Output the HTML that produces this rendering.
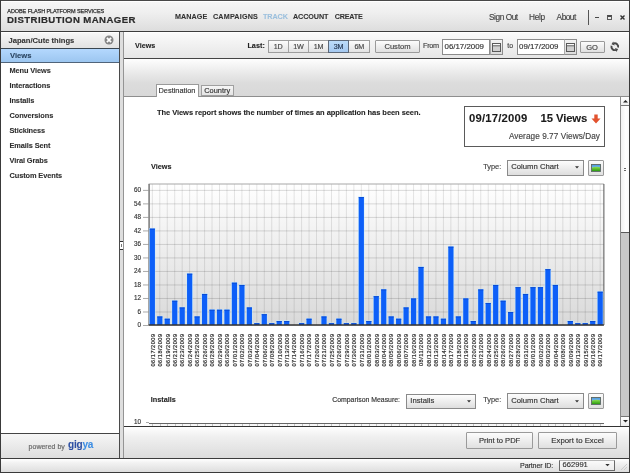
<!DOCTYPE html>
<html><head><meta charset="utf-8"><style>
html,body{margin:0;padding:0;width:630px;height:473px;overflow:hidden;background:#fff}
body{position:relative;font-family:"Liberation Sans", sans-serif;}
div{font-family:"Liberation Sans", sans-serif;}
</style></head><body><div style="position:absolute;left:0;top:0;width:630px;height:473px;will-change:transform">
<div style="position:absolute;left:0;top:0;width:630px;height:473px;background:#fff"></div>
<div style="position:absolute;left:0px;top:0px;width:630px;height:32px;background:linear-gradient(#f7f7f7 0%,#efefef 40%,#dcdcdc 100%)"></div>
<div style="position:absolute;left:0px;top:0px;width:630px;height:1px;background:#484848"></div>
<div style="position:absolute;left:1px;top:1px;width:628px;height:1px;background:#ffffff"></div>
<div style="position:absolute;left:0px;top:31px;width:630px;height:1px;background:#3c3c3c"></div>
<div style="position:absolute;left:7.3px;top:9.35px;font-size:5.5px;line-height:5.5px;font-weight:normal;color:#333;white-space:nowrap;letter-spacing:-0.07px;-webkit-text-stroke:0.15px currentColor;-webkit-text-stroke:0.25px #333;">ADOBE FLASH PLATFORM SERVICES</div>
<div style="position:absolute;left:7px;top:15.20px;font-size:9.6px;line-height:9.6px;font-weight:bold;color:#2b2b2b;white-space:nowrap;letter-spacing:0.42px;-webkit-text-stroke:0.08px currentColor;-webkit-text-stroke:0.2px #2b2b2b;">DISTRIBUTION MANAGER</div>
<div style="position:absolute;left:175px;top:13.20px;font-size:7.2px;line-height:7.2px;font-weight:bold;color:#333;white-space:nowrap;letter-spacing:0.05px;-webkit-text-stroke:0.08px currentColor;">MANAGE</div>
<div style="position:absolute;left:213px;top:13.20px;font-size:7.2px;line-height:7.2px;font-weight:bold;color:#333;white-space:nowrap;letter-spacing:0.18px;-webkit-text-stroke:0.08px currentColor;">CAMPAIGNS</div>
<div style="position:absolute;left:263px;top:13.20px;font-size:7.2px;line-height:7.2px;font-weight:bold;color:#9cc0de;white-space:nowrap;letter-spacing:-0.05px;-webkit-text-stroke:0.08px currentColor;">TRACK</div>
<div style="position:absolute;left:293px;top:13.20px;font-size:7.2px;line-height:7.2px;font-weight:bold;color:#333;white-space:nowrap;letter-spacing:-0.08px;-webkit-text-stroke:0.08px currentColor;">ACCOUNT</div>
<div style="position:absolute;left:334.7px;top:13.20px;font-size:7.2px;line-height:7.2px;font-weight:bold;color:#333;white-space:nowrap;letter-spacing:-0.2px;-webkit-text-stroke:0.08px currentColor;">CREATE</div>
<div style="position:absolute;left:489px;top:13.15px;font-size:8.3px;line-height:8.3px;font-weight:normal;color:#444;white-space:nowrap;letter-spacing:-0.45px;-webkit-text-stroke:0.15px currentColor;">Sign Out</div>
<div style="position:absolute;left:529px;top:13.15px;font-size:8.3px;line-height:8.3px;font-weight:normal;color:#444;white-space:nowrap;letter-spacing:-0.3px;-webkit-text-stroke:0.15px currentColor;">Help</div>
<div style="position:absolute;left:556.6px;top:13.15px;font-size:8.3px;line-height:8.3px;font-weight:normal;color:#444;white-space:nowrap;letter-spacing:-0.5px;-webkit-text-stroke:0.15px currentColor;">About</div>
<div style="position:absolute;left:587.5px;top:9.5px;width:1px;height:15px;background:#555"></div>
<div style="position:absolute;left:594.7px;top:16.6px;width:4.6px;height:1.4px;background:#4a4a4a"></div>
<div style="position:absolute;left:607px;top:14.8px;width:5.2px;height:5.2px;box-sizing:border-box;border:1px solid #5a5a5a;border-top:2px solid #4a4a4a"></div>
<svg style="position:absolute;left:619px;top:14px" width="7" height="7"><path d="M1.5 1.5 L5.5 5.5 M5.5 1.5 L1.5 5.5" stroke="#333" stroke-width="1.4"/></svg>
<div style="position:absolute;left:1px;top:32px;width:118px;height:16px;background:linear-gradient(#f8f8f8,#e2e2e2)"></div>
<div style="position:absolute;left:1px;top:32px;width:118px;height:1px;background:#fff"></div>
<div style="position:absolute;left:1px;top:48px;width:118px;height:1px;background:#3a4650"></div>
<div style="position:absolute;left:8.5px;top:37.00px;font-size:7.6px;line-height:7.6px;font-weight:bold;color:#333;white-space:nowrap;-webkit-text-stroke:0.08px currentColor;">Japan/Cute things</div>
<svg style="position:absolute;left:103.5px;top:35.2px" width="10" height="10"><circle cx="5" cy="5" r="4.5" fill="#858585"/><path d="M2.9 2.9 L7.1 7.1 M7.1 2.9 L2.9 7.1" stroke="#fff" stroke-width="1.7"/></svg>
<div style="position:absolute;left:1px;top:49px;width:118px;height:13px;background:linear-gradient(#b4d8fe,#9cc6f0)"></div>
<div style="position:absolute;left:1px;top:62px;width:118px;height:1px;background:#50647a"></div>
<div style="position:absolute;left:10px;top:52.00px;font-size:7.6px;line-height:7.6px;font-weight:bold;color:#2a4460;white-space:nowrap;-webkit-text-stroke:0.08px currentColor;">Views</div>
<div style="position:absolute;left:9.5px;top:67.10px;font-size:7.4px;line-height:7.4px;font-weight:bold;color:#2e2e2e;white-space:nowrap;letter-spacing:-0.1px;-webkit-text-stroke:0.08px currentColor;">Menu Views</div>
<div style="position:absolute;left:9.5px;top:82.10px;font-size:7.4px;line-height:7.4px;font-weight:bold;color:#2e2e2e;white-space:nowrap;letter-spacing:-0.1px;-webkit-text-stroke:0.08px currentColor;">Interactions</div>
<div style="position:absolute;left:9.5px;top:97.10px;font-size:7.4px;line-height:7.4px;font-weight:bold;color:#2e2e2e;white-space:nowrap;letter-spacing:-0.1px;-webkit-text-stroke:0.08px currentColor;">Installs</div>
<div style="position:absolute;left:9.5px;top:112.10px;font-size:7.4px;line-height:7.4px;font-weight:bold;color:#2e2e2e;white-space:nowrap;letter-spacing:-0.1px;-webkit-text-stroke:0.08px currentColor;">Conversions</div>
<div style="position:absolute;left:9.5px;top:127.10px;font-size:7.4px;line-height:7.4px;font-weight:bold;color:#2e2e2e;white-space:nowrap;letter-spacing:-0.1px;-webkit-text-stroke:0.08px currentColor;">Stickiness</div>
<div style="position:absolute;left:9.5px;top:142.10px;font-size:7.4px;line-height:7.4px;font-weight:bold;color:#2e2e2e;white-space:nowrap;letter-spacing:-0.1px;-webkit-text-stroke:0.08px currentColor;">Emails Sent</div>
<div style="position:absolute;left:9.5px;top:157.10px;font-size:7.4px;line-height:7.4px;font-weight:bold;color:#2e2e2e;white-space:nowrap;letter-spacing:-0.1px;-webkit-text-stroke:0.08px currentColor;">Viral Grabs</div>
<div style="position:absolute;left:9.5px;top:172.10px;font-size:7.4px;line-height:7.4px;font-weight:bold;color:#2e2e2e;white-space:nowrap;letter-spacing:-0.1px;-webkit-text-stroke:0.08px currentColor;">Custom Events</div>
<div style="position:absolute;left:1px;top:433px;width:118px;height:1px;background:#444"></div>
<div style="position:absolute;left:1px;top:434px;width:118px;height:24px;background:linear-gradient(#f6f6f6,#dedede)"></div>
<div style="position:absolute;left:28.6px;top:442.60px;font-size:7px;line-height:7px;font-weight:normal;color:#666;white-space:nowrap;-webkit-text-stroke:0.15px currentColor;">powered by</div>
<div style="position:absolute;left:68px;top:440.10px;font-size:10px;line-height:10px;font-weight:bold;color:#2d4fa3;white-space:nowrap;letter-spacing:-0.2px;-webkit-text-stroke:0.08px currentColor;"><span style="color:#2d4fa3">gig</span><span style="color:#3d8ee4">ya</span></div>
<div style="position:absolute;left:0px;top:0px;width:1px;height:473px;background:#3a3a3a"></div>
<div style="position:absolute;left:119px;top:32px;width:1px;height:427px;background:#4a4a4a"></div>
<div style="position:absolute;left:120px;top:32px;width:3px;height:427px;background:#dedede"></div>
<div style="position:absolute;left:119.5px;top:241px;width:4px;height:9px;box-sizing:border-box;background:#fff;border-top:1px solid #333;border-bottom:1px solid #333"></div>
<div style="position:absolute;left:121px;top:243.5px;width:1px;height:3.5px;background:#777"></div>
<div style="position:absolute;left:123px;top:32px;width:1px;height:427px;background:#949494"></div>
<div style="position:absolute;left:124px;top:32px;width:505px;height:26px;background:linear-gradient(#fbfbfb,#e6e6e6)"></div>
<div style="position:absolute;left:124px;top:32px;width:505px;height:1px;background:#ffffff"></div>
<div style="position:absolute;left:124px;top:58px;width:505px;height:1px;background:#444"></div>
<div style="position:absolute;left:135px;top:41.90px;font-size:7.2px;line-height:7.2px;font-weight:bold;color:#222;white-space:nowrap;-webkit-text-stroke:0.08px currentColor;">Views</div>
<div style="position:absolute;left:247.4px;top:42.15px;font-size:7.3px;line-height:7.3px;font-weight:bold;color:#222;white-space:nowrap;-webkit-text-stroke:0.08px currentColor;">Last:</div>
<div style="position:absolute;left:268px;top:40px;width:102px;height:13px;box-sizing:border-box;border:1px solid #9c9c9c;background:linear-gradient(#fcfcfc,#e3e3e3)"></div>
<div style="position:absolute;left:288px;top:41px;width:1px;height:11px;background:#a4a4a4"></div>
<div style="position:absolute;left:308px;top:41px;width:1px;height:11px;background:#a4a4a4"></div>
<div style="position:absolute;left:328px;top:40px;width:21px;height:13px;box-sizing:border-box;border:1px solid #5c6878;background:linear-gradient(#bcdcfa,#a4c8f0)"></div>
<div style="position:absolute;left:78.19999999999999px;width:400px;text-align:center;top:43.10px;font-size:7.2px;line-height:7.2px;font-weight:normal;color:#444;white-space:nowrap;letter-spacing:-0.2px;-webkit-text-stroke:0.15px currentColor;">1D</div>
<div style="position:absolute;left:98.5px;width:400px;text-align:center;top:43.10px;font-size:7.2px;line-height:7.2px;font-weight:normal;color:#444;white-space:nowrap;letter-spacing:-0.2px;-webkit-text-stroke:0.15px currentColor;">1W</div>
<div style="position:absolute;left:118.5px;width:400px;text-align:center;top:43.10px;font-size:7.2px;line-height:7.2px;font-weight:normal;color:#444;white-space:nowrap;letter-spacing:-0.2px;-webkit-text-stroke:0.15px currentColor;">1M</div>
<div style="position:absolute;left:138.5px;width:400px;text-align:center;top:43.10px;font-size:7.2px;line-height:7.2px;font-weight:normal;color:#22344f;white-space:nowrap;letter-spacing:-0.2px;-webkit-text-stroke:0.15px currentColor;">3M</div>
<div style="position:absolute;left:159.2px;width:400px;text-align:center;top:43.10px;font-size:7.2px;line-height:7.2px;font-weight:normal;color:#444;white-space:nowrap;letter-spacing:-0.2px;-webkit-text-stroke:0.15px currentColor;">6M</div>
<div style="position:absolute;left:375px;top:40px;width:45px;height:13px;box-sizing:border-box;border:1px solid #9a9a9a;background:linear-gradient(#fcfcfc,#e0e0e0);border-radius:1px"></div>
<div style="position:absolute;left:197.5px;width:400px;text-align:center;top:43.00px;font-size:7.6px;line-height:7.6px;font-weight:normal;color:#444;white-space:nowrap;-webkit-text-stroke:0.15px currentColor;">Custom</div>
<div style="position:absolute;left:423px;top:41.55px;font-size:7.3px;line-height:7.3px;font-weight:normal;color:#444;white-space:nowrap;letter-spacing:-0.3px;-webkit-text-stroke:0.15px currentColor;">From</div>
<div style="position:absolute;left:442px;top:39px;width:48px;height:15.5px;box-sizing:border-box;border:1px solid #8c8c8c;background:#fff"></div>
<div style="position:absolute;left:444.5px;top:42.85px;font-size:7.9px;line-height:7.9px;font-weight:normal;color:#333;white-space:nowrap;-webkit-text-stroke:0.15px currentColor;">06/17/2009</div>
<div style="position:absolute;left:489.5px;top:39px;width:13px;height:15.5px;box-sizing:border-box;border:1px solid #8c8c8c;border-left:1px solid #aaa;background:linear-gradient(#f4f4f4,#dcdcdc)"></div>
<svg style="position:absolute;left:491.5px;top:42.5px" width="9" height="9"><rect x="0.5" y="0.5" width="8" height="8" fill="#d0d0d0" stroke="#5a5a5a" stroke-width="1"/><rect x="1" y="1" width="7" height="1.3" fill="#fafafa"/><line x1="1" y1="2.8" x2="8" y2="2.8" stroke="#5a5a5a" stroke-width="0.9"/></svg>
<div style="position:absolute;left:516.5px;top:39px;width:48px;height:15.5px;box-sizing:border-box;border:1px solid #8c8c8c;background:#fff"></div>
<div style="position:absolute;left:519.0px;top:42.85px;font-size:7.9px;line-height:7.9px;font-weight:normal;color:#333;white-space:nowrap;-webkit-text-stroke:0.15px currentColor;">09/17/2009</div>
<div style="position:absolute;left:564.0px;top:39px;width:13px;height:15.5px;box-sizing:border-box;border:1px solid #8c8c8c;border-left:1px solid #aaa;background:linear-gradient(#f4f4f4,#dcdcdc)"></div>
<svg style="position:absolute;left:566.0px;top:42.5px" width="9" height="9"><rect x="0.5" y="0.5" width="8" height="8" fill="#d0d0d0" stroke="#5a5a5a" stroke-width="1"/><rect x="1" y="1" width="7" height="1.3" fill="#fafafa"/><line x1="1" y1="2.8" x2="8" y2="2.8" stroke="#5a5a5a" stroke-width="0.9"/></svg>
<div style="position:absolute;left:507.3px;top:41.90px;font-size:7px;line-height:7px;font-weight:normal;color:#444;white-space:nowrap;-webkit-text-stroke:0.15px currentColor;">to</div>
<div style="position:absolute;left:579.5px;top:40.5px;width:25px;height:12.5px;box-sizing:border-box;border:1px solid #9a9a9a;background:linear-gradient(#fcfcfc,#e0e0e0);border-radius:1px"></div>
<div style="position:absolute;left:392.0px;width:400px;text-align:center;top:43.75px;font-size:7.5px;line-height:7.5px;font-weight:normal;color:#444;white-space:nowrap;-webkit-text-stroke:0.15px currentColor;">GO</div>
<svg style="position:absolute;left:609px;top:41px" width="12" height="12" viewBox="0 0 12 12"><path d="M4.64 2.51 A3.4 3.4 0 0 1 9.08 6.58" stroke="#4a4a4a" stroke-width="1.9" fill="none"/><path d="M2.48 3.29 L4.20 0.43 L5.64 4.38 Z" fill="#4a4a4a"/><path d="M6.96 8.89 A3.4 3.4 0 0 1 2.52 4.82" stroke="#4a4a4a" stroke-width="1.9" fill="none"/><path d="M9.12 8.11 L7.40 10.97 L5.96 7.02 Z" fill="#4a4a4a"/></svg>
<div style="position:absolute;left:124px;top:59px;width:505px;height:37px;background:linear-gradient(#fefefe 0%,#ebebeb 35%,#dcdcdc 65%,#d8d8d8 100%)"></div>
<div style="position:absolute;left:124px;top:96px;width:505px;height:1px;background:#8e8e8e"></div>
<div style="position:absolute;left:155.5px;top:84.2px;width:43px;height:13px;box-sizing:border-box;border:1px solid #9a9a9a;border-bottom:none;background:#fff"></div>
<div style="position:absolute;left:-23px;width:400px;text-align:center;top:87.40px;font-size:7.4px;line-height:7.4px;font-weight:normal;color:#333;white-space:nowrap;-webkit-text-stroke:0.15px currentColor;">Destination</div>
<div style="position:absolute;left:200.7px;top:84.7px;width:33px;height:11.5px;box-sizing:border-box;border:1px solid #a0a0a0;background:linear-gradient(#f6f6f6,#e4e4e4)"></div>
<div style="position:absolute;left:17.19999999999999px;width:400px;text-align:center;top:87.30px;font-size:7.4px;line-height:7.4px;font-weight:normal;color:#333;white-space:nowrap;-webkit-text-stroke:0.15px currentColor;">Country</div>
<div style="position:absolute;left:124px;top:97px;width:496px;height:329px;background:#fff"></div>
<div style="position:absolute;left:157px;top:108.75px;font-size:7.5px;line-height:7.5px;font-weight:bold;color:#1e1e1e;white-space:nowrap;letter-spacing:-0.06px;-webkit-text-stroke:0.08px currentColor;">The Views report shows the number of times an application has been seen.</div>
<div style="position:absolute;left:463.5px;top:105.8px;width:141px;height:41px;box-sizing:border-box;border:1px solid #5a5a5a;background:#fff"></div>
<div style="position:absolute;left:469px;top:113.45px;font-size:11.3px;line-height:11.3px;font-weight:bold;color:#1a1a1a;white-space:nowrap;letter-spacing:0.2px;-webkit-text-stroke:0.08px currentColor;">09/17/2009</div>
<div style="position:absolute;left:540.5px;top:113.45px;font-size:11.3px;line-height:11.3px;font-weight:bold;color:#1a1a1a;white-space:nowrap;letter-spacing:-0.1px;-webkit-text-stroke:0.08px currentColor;">15 Views</div>
<svg style="position:absolute;left:590.5px;top:114px" width="10" height="10" viewBox="0 0 10 10"><path d="M3.3 0.5 H6.7 V4.5 H9.5 L5 9.5 L0.5 4.5 H3.3 Z" fill="#e2522e"/></svg>
<div style="position:absolute;right:30px;top:133.10px;font-size:8.2px;line-height:8.2px;font-weight:normal;color:#444;white-space:nowrap;letter-spacing:0.08px;-webkit-text-stroke:0.15px currentColor;">Average 9.77 Views/Day</div>
<div style="position:absolute;left:151px;top:163.25px;font-size:7.3px;line-height:7.3px;font-weight:bold;color:#222;white-space:nowrap;-webkit-text-stroke:0.08px currentColor;">Views</div>
<div style="position:absolute;left:483.2px;top:163.10px;font-size:7.4px;line-height:7.4px;font-weight:normal;color:#444;white-space:nowrap;-webkit-text-stroke:0.15px currentColor;">Type:</div>
<div style="position:absolute;left:507.3px;top:159.6px;width:76.6px;height:16px;box-sizing:border-box;border:1px solid #8a8a8a;background:linear-gradient(#fdfdfd,#dedede)"></div>
<div style="position:absolute;left:511.3px;top:163.35px;font-size:7.7px;line-height:7.7px;font-weight:normal;color:#333;white-space:nowrap;-webkit-text-stroke:0.15px currentColor;">Column Chart</div>
<svg style="position:absolute;left:573.9px;top:166.0px" width="6" height="4"><path d="M1 0.3 H5 L3 2.5 Z" fill="#333"/></svg>
<div style="position:absolute;left:588px;top:160px;width:16px;height:15.5px;box-sizing:border-box;border:1px solid #9a9a9a;background:linear-gradient(#fbfbfb,#e0e0e0);border-radius:1px"></div>
<svg style="position:absolute;left:591.4px;top:163.7px" width="10" height="8" viewBox="0 0 10 8"><defs><linearGradient id="sky" x1="0" y1="0" x2="0" y2="1"><stop offset="0" stop-color="#4a98e0"/><stop offset="1" stop-color="#a8d8f0"/></linearGradient><linearGradient id="grass" x1="0" y1="0" x2="0" y2="1"><stop offset="0" stop-color="#8ce050"/><stop offset="1" stop-color="#2c9c10"/></linearGradient></defs><rect x="0.5" y="0.5" width="9" height="7" fill="url(#sky)" stroke="#5a6660" stroke-width="0.9"/><path d="M1 3.6 Q5 2.2 9 3.2 V7 H1 Z" fill="url(#grass)"/></svg>
<svg style="position:absolute;left:0;top:0" width="630" height="473" shape-rendering="crispEdges"><defs><linearGradient id="pg" x1="0" y1="0" x2="0" y2="1"><stop offset="0" stop-color="#ffffff"/><stop offset="1" stop-color="#d9d9d9"/></linearGradient></defs><rect x="148.6" y="184" width="455.29999999999995" height="141" fill="url(#pg)"/><line x1="152.33" y1="184" x2="152.33" y2="325" stroke="rgba(0,0,0,0.10)" stroke-width="1" shape-rendering="auto"/><line x1="159.80" y1="184" x2="159.80" y2="325" stroke="rgba(0,0,0,0.10)" stroke-width="1" shape-rendering="auto"/><line x1="167.26" y1="184" x2="167.26" y2="325" stroke="rgba(0,0,0,0.10)" stroke-width="1" shape-rendering="auto"/><line x1="174.72" y1="184" x2="174.72" y2="325" stroke="rgba(0,0,0,0.10)" stroke-width="1" shape-rendering="auto"/><line x1="182.19" y1="184" x2="182.19" y2="325" stroke="rgba(0,0,0,0.10)" stroke-width="1" shape-rendering="auto"/><line x1="189.65" y1="184" x2="189.65" y2="325" stroke="rgba(0,0,0,0.10)" stroke-width="1" shape-rendering="auto"/><line x1="197.12" y1="184" x2="197.12" y2="325" stroke="rgba(0,0,0,0.10)" stroke-width="1" shape-rendering="auto"/><line x1="204.58" y1="184" x2="204.58" y2="325" stroke="rgba(0,0,0,0.10)" stroke-width="1" shape-rendering="auto"/><line x1="212.04" y1="184" x2="212.04" y2="325" stroke="rgba(0,0,0,0.10)" stroke-width="1" shape-rendering="auto"/><line x1="219.51" y1="184" x2="219.51" y2="325" stroke="rgba(0,0,0,0.10)" stroke-width="1" shape-rendering="auto"/><line x1="226.97" y1="184" x2="226.97" y2="325" stroke="rgba(0,0,0,0.10)" stroke-width="1" shape-rendering="auto"/><line x1="234.44" y1="184" x2="234.44" y2="325" stroke="rgba(0,0,0,0.10)" stroke-width="1" shape-rendering="auto"/><line x1="241.90" y1="184" x2="241.90" y2="325" stroke="rgba(0,0,0,0.10)" stroke-width="1" shape-rendering="auto"/><line x1="249.36" y1="184" x2="249.36" y2="325" stroke="rgba(0,0,0,0.10)" stroke-width="1" shape-rendering="auto"/><line x1="256.83" y1="184" x2="256.83" y2="325" stroke="rgba(0,0,0,0.10)" stroke-width="1" shape-rendering="auto"/><line x1="264.29" y1="184" x2="264.29" y2="325" stroke="rgba(0,0,0,0.10)" stroke-width="1" shape-rendering="auto"/><line x1="271.75" y1="184" x2="271.75" y2="325" stroke="rgba(0,0,0,0.10)" stroke-width="1" shape-rendering="auto"/><line x1="279.22" y1="184" x2="279.22" y2="325" stroke="rgba(0,0,0,0.10)" stroke-width="1" shape-rendering="auto"/><line x1="286.68" y1="184" x2="286.68" y2="325" stroke="rgba(0,0,0,0.10)" stroke-width="1" shape-rendering="auto"/><line x1="294.15" y1="184" x2="294.15" y2="325" stroke="rgba(0,0,0,0.10)" stroke-width="1" shape-rendering="auto"/><line x1="301.61" y1="184" x2="301.61" y2="325" stroke="rgba(0,0,0,0.10)" stroke-width="1" shape-rendering="auto"/><line x1="309.07" y1="184" x2="309.07" y2="325" stroke="rgba(0,0,0,0.10)" stroke-width="1" shape-rendering="auto"/><line x1="316.54" y1="184" x2="316.54" y2="325" stroke="rgba(0,0,0,0.10)" stroke-width="1" shape-rendering="auto"/><line x1="324.00" y1="184" x2="324.00" y2="325" stroke="rgba(0,0,0,0.10)" stroke-width="1" shape-rendering="auto"/><line x1="331.47" y1="184" x2="331.47" y2="325" stroke="rgba(0,0,0,0.10)" stroke-width="1" shape-rendering="auto"/><line x1="338.93" y1="184" x2="338.93" y2="325" stroke="rgba(0,0,0,0.10)" stroke-width="1" shape-rendering="auto"/><line x1="346.39" y1="184" x2="346.39" y2="325" stroke="rgba(0,0,0,0.10)" stroke-width="1" shape-rendering="auto"/><line x1="353.86" y1="184" x2="353.86" y2="325" stroke="rgba(0,0,0,0.10)" stroke-width="1" shape-rendering="auto"/><line x1="361.32" y1="184" x2="361.32" y2="325" stroke="rgba(0,0,0,0.10)" stroke-width="1" shape-rendering="auto"/><line x1="368.79" y1="184" x2="368.79" y2="325" stroke="rgba(0,0,0,0.10)" stroke-width="1" shape-rendering="auto"/><line x1="376.25" y1="184" x2="376.25" y2="325" stroke="rgba(0,0,0,0.10)" stroke-width="1" shape-rendering="auto"/><line x1="383.71" y1="184" x2="383.71" y2="325" stroke="rgba(0,0,0,0.10)" stroke-width="1" shape-rendering="auto"/><line x1="391.18" y1="184" x2="391.18" y2="325" stroke="rgba(0,0,0,0.10)" stroke-width="1" shape-rendering="auto"/><line x1="398.64" y1="184" x2="398.64" y2="325" stroke="rgba(0,0,0,0.10)" stroke-width="1" shape-rendering="auto"/><line x1="406.11" y1="184" x2="406.11" y2="325" stroke="rgba(0,0,0,0.10)" stroke-width="1" shape-rendering="auto"/><line x1="413.57" y1="184" x2="413.57" y2="325" stroke="rgba(0,0,0,0.10)" stroke-width="1" shape-rendering="auto"/><line x1="421.03" y1="184" x2="421.03" y2="325" stroke="rgba(0,0,0,0.10)" stroke-width="1" shape-rendering="auto"/><line x1="428.50" y1="184" x2="428.50" y2="325" stroke="rgba(0,0,0,0.10)" stroke-width="1" shape-rendering="auto"/><line x1="435.96" y1="184" x2="435.96" y2="325" stroke="rgba(0,0,0,0.10)" stroke-width="1" shape-rendering="auto"/><line x1="443.43" y1="184" x2="443.43" y2="325" stroke="rgba(0,0,0,0.10)" stroke-width="1" shape-rendering="auto"/><line x1="450.89" y1="184" x2="450.89" y2="325" stroke="rgba(0,0,0,0.10)" stroke-width="1" shape-rendering="auto"/><line x1="458.35" y1="184" x2="458.35" y2="325" stroke="rgba(0,0,0,0.10)" stroke-width="1" shape-rendering="auto"/><line x1="465.82" y1="184" x2="465.82" y2="325" stroke="rgba(0,0,0,0.10)" stroke-width="1" shape-rendering="auto"/><line x1="473.28" y1="184" x2="473.28" y2="325" stroke="rgba(0,0,0,0.10)" stroke-width="1" shape-rendering="auto"/><line x1="480.75" y1="184" x2="480.75" y2="325" stroke="rgba(0,0,0,0.10)" stroke-width="1" shape-rendering="auto"/><line x1="488.21" y1="184" x2="488.21" y2="325" stroke="rgba(0,0,0,0.10)" stroke-width="1" shape-rendering="auto"/><line x1="495.67" y1="184" x2="495.67" y2="325" stroke="rgba(0,0,0,0.10)" stroke-width="1" shape-rendering="auto"/><line x1="503.14" y1="184" x2="503.14" y2="325" stroke="rgba(0,0,0,0.10)" stroke-width="1" shape-rendering="auto"/><line x1="510.60" y1="184" x2="510.60" y2="325" stroke="rgba(0,0,0,0.10)" stroke-width="1" shape-rendering="auto"/><line x1="518.06" y1="184" x2="518.06" y2="325" stroke="rgba(0,0,0,0.10)" stroke-width="1" shape-rendering="auto"/><line x1="525.53" y1="184" x2="525.53" y2="325" stroke="rgba(0,0,0,0.10)" stroke-width="1" shape-rendering="auto"/><line x1="532.99" y1="184" x2="532.99" y2="325" stroke="rgba(0,0,0,0.10)" stroke-width="1" shape-rendering="auto"/><line x1="540.46" y1="184" x2="540.46" y2="325" stroke="rgba(0,0,0,0.10)" stroke-width="1" shape-rendering="auto"/><line x1="547.92" y1="184" x2="547.92" y2="325" stroke="rgba(0,0,0,0.10)" stroke-width="1" shape-rendering="auto"/><line x1="555.38" y1="184" x2="555.38" y2="325" stroke="rgba(0,0,0,0.10)" stroke-width="1" shape-rendering="auto"/><line x1="562.85" y1="184" x2="562.85" y2="325" stroke="rgba(0,0,0,0.10)" stroke-width="1" shape-rendering="auto"/><line x1="570.31" y1="184" x2="570.31" y2="325" stroke="rgba(0,0,0,0.10)" stroke-width="1" shape-rendering="auto"/><line x1="577.78" y1="184" x2="577.78" y2="325" stroke="rgba(0,0,0,0.10)" stroke-width="1" shape-rendering="auto"/><line x1="585.24" y1="184" x2="585.24" y2="325" stroke="rgba(0,0,0,0.10)" stroke-width="1" shape-rendering="auto"/><line x1="592.70" y1="184" x2="592.70" y2="325" stroke="rgba(0,0,0,0.10)" stroke-width="1" shape-rendering="auto"/><line x1="600.17" y1="184" x2="600.17" y2="325" stroke="rgba(0,0,0,0.10)" stroke-width="1" shape-rendering="auto"/><line x1="148.6" y1="325.50" x2="603.9" y2="325.50" stroke="rgba(0,0,0,0.14)" stroke-width="1" shape-rendering="auto"/><line x1="143" y1="325.50" x2="148.6" y2="325.50" stroke="#aaa" stroke-width="1" shape-rendering="auto"/><line x1="148.6" y1="311.99" x2="603.9" y2="311.99" stroke="rgba(0,0,0,0.14)" stroke-width="1" shape-rendering="auto"/><line x1="143" y1="311.99" x2="148.6" y2="311.99" stroke="#aaa" stroke-width="1" shape-rendering="auto"/><line x1="148.6" y1="298.48" x2="603.9" y2="298.48" stroke="rgba(0,0,0,0.14)" stroke-width="1" shape-rendering="auto"/><line x1="143" y1="298.48" x2="148.6" y2="298.48" stroke="#aaa" stroke-width="1" shape-rendering="auto"/><line x1="148.6" y1="284.96" x2="603.9" y2="284.96" stroke="rgba(0,0,0,0.14)" stroke-width="1" shape-rendering="auto"/><line x1="143" y1="284.96" x2="148.6" y2="284.96" stroke="#aaa" stroke-width="1" shape-rendering="auto"/><line x1="148.6" y1="271.45" x2="603.9" y2="271.45" stroke="rgba(0,0,0,0.14)" stroke-width="1" shape-rendering="auto"/><line x1="143" y1="271.45" x2="148.6" y2="271.45" stroke="#aaa" stroke-width="1" shape-rendering="auto"/><line x1="148.6" y1="257.94" x2="603.9" y2="257.94" stroke="rgba(0,0,0,0.14)" stroke-width="1" shape-rendering="auto"/><line x1="143" y1="257.94" x2="148.6" y2="257.94" stroke="#aaa" stroke-width="1" shape-rendering="auto"/><line x1="148.6" y1="244.43" x2="603.9" y2="244.43" stroke="rgba(0,0,0,0.14)" stroke-width="1" shape-rendering="auto"/><line x1="143" y1="244.43" x2="148.6" y2="244.43" stroke="#aaa" stroke-width="1" shape-rendering="auto"/><line x1="148.6" y1="230.92" x2="603.9" y2="230.92" stroke="rgba(0,0,0,0.14)" stroke-width="1" shape-rendering="auto"/><line x1="143" y1="230.92" x2="148.6" y2="230.92" stroke="#aaa" stroke-width="1" shape-rendering="auto"/><line x1="148.6" y1="217.40" x2="603.9" y2="217.40" stroke="rgba(0,0,0,0.14)" stroke-width="1" shape-rendering="auto"/><line x1="143" y1="217.40" x2="148.6" y2="217.40" stroke="#aaa" stroke-width="1" shape-rendering="auto"/><line x1="148.6" y1="203.89" x2="603.9" y2="203.89" stroke="rgba(0,0,0,0.14)" stroke-width="1" shape-rendering="auto"/><line x1="143" y1="203.89" x2="148.6" y2="203.89" stroke="#aaa" stroke-width="1" shape-rendering="auto"/><line x1="148.6" y1="190.38" x2="603.9" y2="190.38" stroke="rgba(0,0,0,0.14)" stroke-width="1" shape-rendering="auto"/><line x1="143" y1="190.38" x2="148.6" y2="190.38" stroke="#aaa" stroke-width="1" shape-rendering="auto"/><line x1="148.6" y1="184" x2="603.9" y2="184" stroke="#a8a8a8" stroke-width="1.2" shape-rendering="auto"/><line x1="603.9" y1="184" x2="603.9" y2="325" stroke="#555" stroke-width="1" shape-rendering="auto"/><line x1="149.1" y1="184" x2="149.1" y2="325" stroke="#808080" stroke-width="1.6" shape-rendering="auto"/><rect x="149.13" y="227.96" width="6.4" height="97.04" fill="#c4ecff" fill-opacity="0.75" shape-rendering="auto"/><rect x="149.73" y="228.66" width="5.2" height="96.34" fill="#0d5ff8" shape-rendering="auto"/><rect x="149.73" y="228.66" width="5.2" height="0.90" fill="#0a48d0" shape-rendering="auto"/><rect x="156.60" y="315.79" width="6.4" height="9.21" fill="#c4ecff" fill-opacity="0.75" shape-rendering="auto"/><rect x="157.20" y="316.49" width="5.2" height="8.51" fill="#0d5ff8" shape-rendering="auto"/><rect x="157.20" y="316.49" width="5.2" height="0.90" fill="#0a48d0" shape-rendering="auto"/><rect x="164.06" y="318.04" width="6.4" height="6.96" fill="#c4ecff" fill-opacity="0.75" shape-rendering="auto"/><rect x="164.66" y="318.74" width="5.2" height="6.26" fill="#0d5ff8" shape-rendering="auto"/><rect x="164.66" y="318.74" width="5.2" height="0.90" fill="#0a48d0" shape-rendering="auto"/><rect x="171.52" y="300.03" width="6.4" height="24.97" fill="#c4ecff" fill-opacity="0.75" shape-rendering="auto"/><rect x="172.12" y="300.73" width="5.2" height="24.27" fill="#0d5ff8" shape-rendering="auto"/><rect x="172.12" y="300.73" width="5.2" height="0.90" fill="#0a48d0" shape-rendering="auto"/><rect x="178.99" y="306.78" width="6.4" height="18.22" fill="#c4ecff" fill-opacity="0.75" shape-rendering="auto"/><rect x="179.59" y="307.48" width="5.2" height="17.52" fill="#0d5ff8" shape-rendering="auto"/><rect x="179.59" y="307.48" width="5.2" height="0.90" fill="#0a48d0" shape-rendering="auto"/><rect x="186.45" y="273.00" width="6.4" height="52.00" fill="#c4ecff" fill-opacity="0.75" shape-rendering="auto"/><rect x="187.05" y="273.70" width="5.2" height="51.30" fill="#0d5ff8" shape-rendering="auto"/><rect x="187.05" y="273.70" width="5.2" height="0.90" fill="#0a48d0" shape-rendering="auto"/><rect x="193.92" y="315.79" width="6.4" height="9.21" fill="#c4ecff" fill-opacity="0.75" shape-rendering="auto"/><rect x="194.52" y="316.49" width="5.2" height="8.51" fill="#0d5ff8" shape-rendering="auto"/><rect x="194.52" y="316.49" width="5.2" height="0.90" fill="#0a48d0" shape-rendering="auto"/><rect x="201.38" y="293.27" width="6.4" height="31.73" fill="#c4ecff" fill-opacity="0.75" shape-rendering="auto"/><rect x="201.98" y="293.97" width="5.2" height="31.03" fill="#0d5ff8" shape-rendering="auto"/><rect x="201.98" y="293.97" width="5.2" height="0.90" fill="#0a48d0" shape-rendering="auto"/><rect x="208.84" y="309.04" width="6.4" height="15.96" fill="#c4ecff" fill-opacity="0.75" shape-rendering="auto"/><rect x="209.44" y="309.74" width="5.2" height="15.26" fill="#0d5ff8" shape-rendering="auto"/><rect x="209.44" y="309.74" width="5.2" height="0.90" fill="#0a48d0" shape-rendering="auto"/><rect x="216.31" y="309.04" width="6.4" height="15.96" fill="#c4ecff" fill-opacity="0.75" shape-rendering="auto"/><rect x="216.91" y="309.74" width="5.2" height="15.26" fill="#0d5ff8" shape-rendering="auto"/><rect x="216.91" y="309.74" width="5.2" height="0.90" fill="#0a48d0" shape-rendering="auto"/><rect x="223.77" y="309.04" width="6.4" height="15.96" fill="#c4ecff" fill-opacity="0.75" shape-rendering="auto"/><rect x="224.37" y="309.74" width="5.2" height="15.26" fill="#0d5ff8" shape-rendering="auto"/><rect x="224.37" y="309.74" width="5.2" height="0.90" fill="#0a48d0" shape-rendering="auto"/><rect x="231.24" y="282.01" width="6.4" height="42.99" fill="#c4ecff" fill-opacity="0.75" shape-rendering="auto"/><rect x="231.84" y="282.71" width="5.2" height="42.29" fill="#0d5ff8" shape-rendering="auto"/><rect x="231.84" y="282.71" width="5.2" height="0.90" fill="#0a48d0" shape-rendering="auto"/><rect x="238.70" y="284.26" width="6.4" height="40.74" fill="#c4ecff" fill-opacity="0.75" shape-rendering="auto"/><rect x="239.30" y="284.96" width="5.2" height="40.04" fill="#0d5ff8" shape-rendering="auto"/><rect x="239.30" y="284.96" width="5.2" height="0.90" fill="#0a48d0" shape-rendering="auto"/><rect x="246.16" y="306.78" width="6.4" height="18.22" fill="#c4ecff" fill-opacity="0.75" shape-rendering="auto"/><rect x="246.76" y="307.48" width="5.2" height="17.52" fill="#0d5ff8" shape-rendering="auto"/><rect x="246.76" y="307.48" width="5.2" height="0.90" fill="#0a48d0" shape-rendering="auto"/><rect x="253.63" y="322.55" width="6.4" height="2.45" fill="#c4ecff" fill-opacity="0.75" shape-rendering="auto"/><rect x="254.23" y="323.25" width="5.2" height="1.75" fill="#0d5ff8" shape-rendering="auto"/><rect x="254.23" y="323.25" width="5.2" height="0.90" fill="#0a48d0" shape-rendering="auto"/><rect x="261.09" y="313.54" width="6.4" height="11.46" fill="#c4ecff" fill-opacity="0.75" shape-rendering="auto"/><rect x="261.69" y="314.24" width="5.2" height="10.76" fill="#0d5ff8" shape-rendering="auto"/><rect x="261.69" y="314.24" width="5.2" height="0.90" fill="#0a48d0" shape-rendering="auto"/><rect x="268.55" y="322.55" width="6.4" height="2.45" fill="#c4ecff" fill-opacity="0.75" shape-rendering="auto"/><rect x="269.15" y="323.25" width="5.2" height="1.75" fill="#0d5ff8" shape-rendering="auto"/><rect x="269.15" y="323.25" width="5.2" height="0.90" fill="#0a48d0" shape-rendering="auto"/><rect x="276.02" y="320.30" width="6.4" height="4.70" fill="#c4ecff" fill-opacity="0.75" shape-rendering="auto"/><rect x="276.62" y="321.00" width="5.2" height="4.00" fill="#0d5ff8" shape-rendering="auto"/><rect x="276.62" y="321.00" width="5.2" height="0.90" fill="#0a48d0" shape-rendering="auto"/><rect x="283.48" y="320.30" width="6.4" height="4.70" fill="#c4ecff" fill-opacity="0.75" shape-rendering="auto"/><rect x="284.08" y="321.00" width="5.2" height="4.00" fill="#0d5ff8" shape-rendering="auto"/><rect x="284.08" y="321.00" width="5.2" height="0.90" fill="#0a48d0" shape-rendering="auto"/><rect x="298.41" y="322.55" width="6.4" height="2.45" fill="#c4ecff" fill-opacity="0.75" shape-rendering="auto"/><rect x="299.01" y="323.25" width="5.2" height="1.75" fill="#0d5ff8" shape-rendering="auto"/><rect x="299.01" y="323.25" width="5.2" height="0.90" fill="#0a48d0" shape-rendering="auto"/><rect x="305.87" y="318.04" width="6.4" height="6.96" fill="#c4ecff" fill-opacity="0.75" shape-rendering="auto"/><rect x="306.47" y="318.74" width="5.2" height="6.26" fill="#0d5ff8" shape-rendering="auto"/><rect x="306.47" y="318.74" width="5.2" height="0.90" fill="#0a48d0" shape-rendering="auto"/><rect x="320.80" y="315.79" width="6.4" height="9.21" fill="#c4ecff" fill-opacity="0.75" shape-rendering="auto"/><rect x="321.40" y="316.49" width="5.2" height="8.51" fill="#0d5ff8" shape-rendering="auto"/><rect x="321.40" y="316.49" width="5.2" height="0.90" fill="#0a48d0" shape-rendering="auto"/><rect x="328.27" y="322.55" width="6.4" height="2.45" fill="#c4ecff" fill-opacity="0.75" shape-rendering="auto"/><rect x="328.87" y="323.25" width="5.2" height="1.75" fill="#0d5ff8" shape-rendering="auto"/><rect x="328.87" y="323.25" width="5.2" height="0.90" fill="#0a48d0" shape-rendering="auto"/><rect x="335.73" y="318.04" width="6.4" height="6.96" fill="#c4ecff" fill-opacity="0.75" shape-rendering="auto"/><rect x="336.33" y="318.74" width="5.2" height="6.26" fill="#0d5ff8" shape-rendering="auto"/><rect x="336.33" y="318.74" width="5.2" height="0.90" fill="#0a48d0" shape-rendering="auto"/><rect x="343.19" y="322.55" width="6.4" height="2.45" fill="#c4ecff" fill-opacity="0.75" shape-rendering="auto"/><rect x="343.79" y="323.25" width="5.2" height="1.75" fill="#0d5ff8" shape-rendering="auto"/><rect x="343.79" y="323.25" width="5.2" height="0.90" fill="#0a48d0" shape-rendering="auto"/><rect x="350.66" y="322.55" width="6.4" height="2.45" fill="#c4ecff" fill-opacity="0.75" shape-rendering="auto"/><rect x="351.26" y="323.25" width="5.2" height="1.75" fill="#0d5ff8" shape-rendering="auto"/><rect x="351.26" y="323.25" width="5.2" height="0.90" fill="#0a48d0" shape-rendering="auto"/><rect x="358.12" y="196.44" width="6.4" height="128.56" fill="#c4ecff" fill-opacity="0.75" shape-rendering="auto"/><rect x="358.72" y="197.14" width="5.2" height="127.86" fill="#0d5ff8" shape-rendering="auto"/><rect x="358.72" y="197.14" width="5.2" height="0.90" fill="#0a48d0" shape-rendering="auto"/><rect x="365.59" y="320.30" width="6.4" height="4.70" fill="#c4ecff" fill-opacity="0.75" shape-rendering="auto"/><rect x="366.19" y="321.00" width="5.2" height="4.00" fill="#0d5ff8" shape-rendering="auto"/><rect x="366.19" y="321.00" width="5.2" height="0.90" fill="#0a48d0" shape-rendering="auto"/><rect x="373.05" y="295.52" width="6.4" height="29.48" fill="#c4ecff" fill-opacity="0.75" shape-rendering="auto"/><rect x="373.65" y="296.22" width="5.2" height="28.78" fill="#0d5ff8" shape-rendering="auto"/><rect x="373.65" y="296.22" width="5.2" height="0.90" fill="#0a48d0" shape-rendering="auto"/><rect x="380.51" y="288.77" width="6.4" height="36.23" fill="#c4ecff" fill-opacity="0.75" shape-rendering="auto"/><rect x="381.11" y="289.47" width="5.2" height="35.53" fill="#0d5ff8" shape-rendering="auto"/><rect x="381.11" y="289.47" width="5.2" height="0.90" fill="#0a48d0" shape-rendering="auto"/><rect x="387.98" y="315.79" width="6.4" height="9.21" fill="#c4ecff" fill-opacity="0.75" shape-rendering="auto"/><rect x="388.58" y="316.49" width="5.2" height="8.51" fill="#0d5ff8" shape-rendering="auto"/><rect x="388.58" y="316.49" width="5.2" height="0.90" fill="#0a48d0" shape-rendering="auto"/><rect x="395.44" y="318.04" width="6.4" height="6.96" fill="#c4ecff" fill-opacity="0.75" shape-rendering="auto"/><rect x="396.04" y="318.74" width="5.2" height="6.26" fill="#0d5ff8" shape-rendering="auto"/><rect x="396.04" y="318.74" width="5.2" height="0.90" fill="#0a48d0" shape-rendering="auto"/><rect x="402.91" y="306.78" width="6.4" height="18.22" fill="#c4ecff" fill-opacity="0.75" shape-rendering="auto"/><rect x="403.51" y="307.48" width="5.2" height="17.52" fill="#0d5ff8" shape-rendering="auto"/><rect x="403.51" y="307.48" width="5.2" height="0.90" fill="#0a48d0" shape-rendering="auto"/><rect x="410.37" y="297.78" width="6.4" height="27.22" fill="#c4ecff" fill-opacity="0.75" shape-rendering="auto"/><rect x="410.97" y="298.48" width="5.2" height="26.52" fill="#0d5ff8" shape-rendering="auto"/><rect x="410.97" y="298.48" width="5.2" height="0.90" fill="#0a48d0" shape-rendering="auto"/><rect x="417.83" y="266.25" width="6.4" height="58.75" fill="#c4ecff" fill-opacity="0.75" shape-rendering="auto"/><rect x="418.43" y="266.95" width="5.2" height="58.05" fill="#0d5ff8" shape-rendering="auto"/><rect x="418.43" y="266.95" width="5.2" height="0.90" fill="#0a48d0" shape-rendering="auto"/><rect x="425.30" y="315.79" width="6.4" height="9.21" fill="#c4ecff" fill-opacity="0.75" shape-rendering="auto"/><rect x="425.90" y="316.49" width="5.2" height="8.51" fill="#0d5ff8" shape-rendering="auto"/><rect x="425.90" y="316.49" width="5.2" height="0.90" fill="#0a48d0" shape-rendering="auto"/><rect x="432.76" y="315.79" width="6.4" height="9.21" fill="#c4ecff" fill-opacity="0.75" shape-rendering="auto"/><rect x="433.36" y="316.49" width="5.2" height="8.51" fill="#0d5ff8" shape-rendering="auto"/><rect x="433.36" y="316.49" width="5.2" height="0.90" fill="#0a48d0" shape-rendering="auto"/><rect x="440.23" y="318.04" width="6.4" height="6.96" fill="#c4ecff" fill-opacity="0.75" shape-rendering="auto"/><rect x="440.83" y="318.74" width="5.2" height="6.26" fill="#0d5ff8" shape-rendering="auto"/><rect x="440.83" y="318.74" width="5.2" height="0.90" fill="#0a48d0" shape-rendering="auto"/><rect x="447.69" y="245.98" width="6.4" height="79.02" fill="#c4ecff" fill-opacity="0.75" shape-rendering="auto"/><rect x="448.29" y="246.68" width="5.2" height="78.32" fill="#0d5ff8" shape-rendering="auto"/><rect x="448.29" y="246.68" width="5.2" height="0.90" fill="#0a48d0" shape-rendering="auto"/><rect x="455.15" y="315.79" width="6.4" height="9.21" fill="#c4ecff" fill-opacity="0.75" shape-rendering="auto"/><rect x="455.75" y="316.49" width="5.2" height="8.51" fill="#0d5ff8" shape-rendering="auto"/><rect x="455.75" y="316.49" width="5.2" height="0.90" fill="#0a48d0" shape-rendering="auto"/><rect x="462.62" y="297.78" width="6.4" height="27.22" fill="#c4ecff" fill-opacity="0.75" shape-rendering="auto"/><rect x="463.22" y="298.48" width="5.2" height="26.52" fill="#0d5ff8" shape-rendering="auto"/><rect x="463.22" y="298.48" width="5.2" height="0.90" fill="#0a48d0" shape-rendering="auto"/><rect x="470.08" y="320.30" width="6.4" height="4.70" fill="#c4ecff" fill-opacity="0.75" shape-rendering="auto"/><rect x="470.68" y="321.00" width="5.2" height="4.00" fill="#0d5ff8" shape-rendering="auto"/><rect x="470.68" y="321.00" width="5.2" height="0.90" fill="#0a48d0" shape-rendering="auto"/><rect x="477.55" y="288.77" width="6.4" height="36.23" fill="#c4ecff" fill-opacity="0.75" shape-rendering="auto"/><rect x="478.15" y="289.47" width="5.2" height="35.53" fill="#0d5ff8" shape-rendering="auto"/><rect x="478.15" y="289.47" width="5.2" height="0.90" fill="#0a48d0" shape-rendering="auto"/><rect x="485.01" y="302.28" width="6.4" height="22.72" fill="#c4ecff" fill-opacity="0.75" shape-rendering="auto"/><rect x="485.61" y="302.98" width="5.2" height="22.02" fill="#0d5ff8" shape-rendering="auto"/><rect x="485.61" y="302.98" width="5.2" height="0.90" fill="#0a48d0" shape-rendering="auto"/><rect x="492.47" y="284.26" width="6.4" height="40.74" fill="#c4ecff" fill-opacity="0.75" shape-rendering="auto"/><rect x="493.07" y="284.96" width="5.2" height="40.04" fill="#0d5ff8" shape-rendering="auto"/><rect x="493.07" y="284.96" width="5.2" height="0.90" fill="#0a48d0" shape-rendering="auto"/><rect x="499.94" y="300.03" width="6.4" height="24.97" fill="#c4ecff" fill-opacity="0.75" shape-rendering="auto"/><rect x="500.54" y="300.73" width="5.2" height="24.27" fill="#0d5ff8" shape-rendering="auto"/><rect x="500.54" y="300.73" width="5.2" height="0.90" fill="#0a48d0" shape-rendering="auto"/><rect x="507.40" y="311.29" width="6.4" height="13.71" fill="#c4ecff" fill-opacity="0.75" shape-rendering="auto"/><rect x="508.00" y="311.99" width="5.2" height="13.01" fill="#0d5ff8" shape-rendering="auto"/><rect x="508.00" y="311.99" width="5.2" height="0.90" fill="#0a48d0" shape-rendering="auto"/><rect x="514.86" y="286.52" width="6.4" height="38.48" fill="#c4ecff" fill-opacity="0.75" shape-rendering="auto"/><rect x="515.46" y="287.22" width="5.2" height="37.78" fill="#0d5ff8" shape-rendering="auto"/><rect x="515.46" y="287.22" width="5.2" height="0.90" fill="#0a48d0" shape-rendering="auto"/><rect x="522.33" y="293.27" width="6.4" height="31.73" fill="#c4ecff" fill-opacity="0.75" shape-rendering="auto"/><rect x="522.93" y="293.97" width="5.2" height="31.03" fill="#0d5ff8" shape-rendering="auto"/><rect x="522.93" y="293.97" width="5.2" height="0.90" fill="#0a48d0" shape-rendering="auto"/><rect x="529.79" y="286.52" width="6.4" height="38.48" fill="#c4ecff" fill-opacity="0.75" shape-rendering="auto"/><rect x="530.39" y="287.22" width="5.2" height="37.78" fill="#0d5ff8" shape-rendering="auto"/><rect x="530.39" y="287.22" width="5.2" height="0.90" fill="#0a48d0" shape-rendering="auto"/><rect x="537.26" y="286.52" width="6.4" height="38.48" fill="#c4ecff" fill-opacity="0.75" shape-rendering="auto"/><rect x="537.86" y="287.22" width="5.2" height="37.78" fill="#0d5ff8" shape-rendering="auto"/><rect x="537.86" y="287.22" width="5.2" height="0.90" fill="#0a48d0" shape-rendering="auto"/><rect x="544.72" y="268.50" width="6.4" height="56.50" fill="#c4ecff" fill-opacity="0.75" shape-rendering="auto"/><rect x="545.32" y="269.20" width="5.2" height="55.80" fill="#0d5ff8" shape-rendering="auto"/><rect x="545.32" y="269.20" width="5.2" height="0.90" fill="#0a48d0" shape-rendering="auto"/><rect x="552.18" y="284.26" width="6.4" height="40.74" fill="#c4ecff" fill-opacity="0.75" shape-rendering="auto"/><rect x="552.78" y="284.96" width="5.2" height="40.04" fill="#0d5ff8" shape-rendering="auto"/><rect x="552.78" y="284.96" width="5.2" height="0.90" fill="#0a48d0" shape-rendering="auto"/><rect x="567.11" y="320.30" width="6.4" height="4.70" fill="#c4ecff" fill-opacity="0.75" shape-rendering="auto"/><rect x="567.71" y="321.00" width="5.2" height="4.00" fill="#0d5ff8" shape-rendering="auto"/><rect x="567.71" y="321.00" width="5.2" height="0.90" fill="#0a48d0" shape-rendering="auto"/><rect x="574.58" y="322.55" width="6.4" height="2.45" fill="#c4ecff" fill-opacity="0.75" shape-rendering="auto"/><rect x="575.18" y="323.25" width="5.2" height="1.75" fill="#0d5ff8" shape-rendering="auto"/><rect x="575.18" y="323.25" width="5.2" height="0.90" fill="#0a48d0" shape-rendering="auto"/><rect x="582.04" y="322.55" width="6.4" height="2.45" fill="#c4ecff" fill-opacity="0.75" shape-rendering="auto"/><rect x="582.64" y="323.25" width="5.2" height="1.75" fill="#0d5ff8" shape-rendering="auto"/><rect x="582.64" y="323.25" width="5.2" height="0.90" fill="#0a48d0" shape-rendering="auto"/><rect x="589.50" y="320.30" width="6.4" height="4.70" fill="#c4ecff" fill-opacity="0.75" shape-rendering="auto"/><rect x="590.10" y="321.00" width="5.2" height="4.00" fill="#0d5ff8" shape-rendering="auto"/><rect x="590.10" y="321.00" width="5.2" height="0.90" fill="#0a48d0" shape-rendering="auto"/><rect x="596.97" y="291.02" width="6.4" height="33.98" fill="#c4ecff" fill-opacity="0.75" shape-rendering="auto"/><rect x="597.57" y="291.72" width="5.2" height="33.28" fill="#0d5ff8" shape-rendering="auto"/><rect x="597.57" y="291.72" width="5.2" height="0.90" fill="#0a48d0" shape-rendering="auto"/><line x1="148.6" y1="325" x2="603.9" y2="325" stroke="#333" stroke-width="1.4" shape-rendering="auto"/></svg>
<div style="position:absolute;right:489px;top:322.45px;font-size:6.3px;line-height:6.3px;font-weight:normal;color:#333;white-space:nowrap;-webkit-text-stroke:0.15px currentColor;">0</div>
<div style="position:absolute;right:489px;top:308.94px;font-size:6.3px;line-height:6.3px;font-weight:normal;color:#333;white-space:nowrap;-webkit-text-stroke:0.15px currentColor;">6</div>
<div style="position:absolute;right:489px;top:295.43px;font-size:6.3px;line-height:6.3px;font-weight:normal;color:#333;white-space:nowrap;-webkit-text-stroke:0.15px currentColor;">12</div>
<div style="position:absolute;right:489px;top:281.91px;font-size:6.3px;line-height:6.3px;font-weight:normal;color:#333;white-space:nowrap;-webkit-text-stroke:0.15px currentColor;">18</div>
<div style="position:absolute;right:489px;top:268.40px;font-size:6.3px;line-height:6.3px;font-weight:normal;color:#333;white-space:nowrap;-webkit-text-stroke:0.15px currentColor;">24</div>
<div style="position:absolute;right:489px;top:254.89px;font-size:6.3px;line-height:6.3px;font-weight:normal;color:#333;white-space:nowrap;-webkit-text-stroke:0.15px currentColor;">30</div>
<div style="position:absolute;right:489px;top:241.38px;font-size:6.3px;line-height:6.3px;font-weight:normal;color:#333;white-space:nowrap;-webkit-text-stroke:0.15px currentColor;">36</div>
<div style="position:absolute;right:489px;top:227.87px;font-size:6.3px;line-height:6.3px;font-weight:normal;color:#333;white-space:nowrap;-webkit-text-stroke:0.15px currentColor;">42</div>
<div style="position:absolute;right:489px;top:214.35px;font-size:6.3px;line-height:6.3px;font-weight:normal;color:#333;white-space:nowrap;-webkit-text-stroke:0.15px currentColor;">48</div>
<div style="position:absolute;right:489px;top:200.84px;font-size:6.3px;line-height:6.3px;font-weight:normal;color:#333;white-space:nowrap;-webkit-text-stroke:0.15px currentColor;">54</div>
<div style="position:absolute;right:489px;top:187.33px;font-size:6.3px;line-height:6.3px;font-weight:normal;color:#333;white-space:nowrap;-webkit-text-stroke:0.15px currentColor;">60</div>
<div style="position:absolute;left:112.63px;top:330.00px;width:40px;height:7px;font-size:5.6px;line-height:7px;letter-spacing:0.5px;color:#222;white-space:nowrap;text-align:right;-webkit-text-stroke:0.2px #333;transform-origin:40px 3.5px;transform:rotate(-90deg);">06/17/2009</div>
<div style="position:absolute;left:120.10px;top:330.00px;width:40px;height:7px;font-size:5.6px;line-height:7px;letter-spacing:0.5px;color:#222;white-space:nowrap;text-align:right;-webkit-text-stroke:0.2px #333;transform-origin:40px 3.5px;transform:rotate(-90deg);">06/18/2009</div>
<div style="position:absolute;left:127.56px;top:330.00px;width:40px;height:7px;font-size:5.6px;line-height:7px;letter-spacing:0.5px;color:#222;white-space:nowrap;text-align:right;-webkit-text-stroke:0.2px #333;transform-origin:40px 3.5px;transform:rotate(-90deg);">06/19/2009</div>
<div style="position:absolute;left:135.02px;top:330.00px;width:40px;height:7px;font-size:5.6px;line-height:7px;letter-spacing:0.5px;color:#222;white-space:nowrap;text-align:right;-webkit-text-stroke:0.2px #333;transform-origin:40px 3.5px;transform:rotate(-90deg);">06/21/2009</div>
<div style="position:absolute;left:142.49px;top:330.00px;width:40px;height:7px;font-size:5.6px;line-height:7px;letter-spacing:0.5px;color:#222;white-space:nowrap;text-align:right;-webkit-text-stroke:0.2px #333;transform-origin:40px 3.5px;transform:rotate(-90deg);">06/23/2009</div>
<div style="position:absolute;left:149.95px;top:330.00px;width:40px;height:7px;font-size:5.6px;line-height:7px;letter-spacing:0.5px;color:#222;white-space:nowrap;text-align:right;-webkit-text-stroke:0.2px #333;transform-origin:40px 3.5px;transform:rotate(-90deg);">06/24/2009</div>
<div style="position:absolute;left:157.42px;top:330.00px;width:40px;height:7px;font-size:5.6px;line-height:7px;letter-spacing:0.5px;color:#222;white-space:nowrap;text-align:right;-webkit-text-stroke:0.2px #333;transform-origin:40px 3.5px;transform:rotate(-90deg);">06/25/2009</div>
<div style="position:absolute;left:164.88px;top:330.00px;width:40px;height:7px;font-size:5.6px;line-height:7px;letter-spacing:0.5px;color:#222;white-space:nowrap;text-align:right;-webkit-text-stroke:0.2px #333;transform-origin:40px 3.5px;transform:rotate(-90deg);">06/26/2009</div>
<div style="position:absolute;left:172.34px;top:330.00px;width:40px;height:7px;font-size:5.6px;line-height:7px;letter-spacing:0.5px;color:#222;white-space:nowrap;text-align:right;-webkit-text-stroke:0.2px #333;transform-origin:40px 3.5px;transform:rotate(-90deg);">06/28/2009</div>
<div style="position:absolute;left:179.81px;top:330.00px;width:40px;height:7px;font-size:5.6px;line-height:7px;letter-spacing:0.5px;color:#222;white-space:nowrap;text-align:right;-webkit-text-stroke:0.2px #333;transform-origin:40px 3.5px;transform:rotate(-90deg);">06/29/2009</div>
<div style="position:absolute;left:187.27px;top:330.00px;width:40px;height:7px;font-size:5.6px;line-height:7px;letter-spacing:0.5px;color:#222;white-space:nowrap;text-align:right;-webkit-text-stroke:0.2px #333;transform-origin:40px 3.5px;transform:rotate(-90deg);">06/30/2009</div>
<div style="position:absolute;left:194.74px;top:330.00px;width:40px;height:7px;font-size:5.6px;line-height:7px;letter-spacing:0.5px;color:#222;white-space:nowrap;text-align:right;-webkit-text-stroke:0.2px #333;transform-origin:40px 3.5px;transform:rotate(-90deg);">07/01/2009</div>
<div style="position:absolute;left:202.20px;top:330.00px;width:40px;height:7px;font-size:5.6px;line-height:7px;letter-spacing:0.5px;color:#222;white-space:nowrap;text-align:right;-webkit-text-stroke:0.2px #333;transform-origin:40px 3.5px;transform:rotate(-90deg);">07/02/2009</div>
<div style="position:absolute;left:209.66px;top:330.00px;width:40px;height:7px;font-size:5.6px;line-height:7px;letter-spacing:0.5px;color:#222;white-space:nowrap;text-align:right;-webkit-text-stroke:0.2px #333;transform-origin:40px 3.5px;transform:rotate(-90deg);">07/03/2009</div>
<div style="position:absolute;left:217.13px;top:330.00px;width:40px;height:7px;font-size:5.6px;line-height:7px;letter-spacing:0.5px;color:#222;white-space:nowrap;text-align:right;-webkit-text-stroke:0.2px #333;transform-origin:40px 3.5px;transform:rotate(-90deg);">07/04/2009</div>
<div style="position:absolute;left:224.59px;top:330.00px;width:40px;height:7px;font-size:5.6px;line-height:7px;letter-spacing:0.5px;color:#222;white-space:nowrap;text-align:right;-webkit-text-stroke:0.2px #333;transform-origin:40px 3.5px;transform:rotate(-90deg);">07/06/2009</div>
<div style="position:absolute;left:232.05px;top:330.00px;width:40px;height:7px;font-size:5.6px;line-height:7px;letter-spacing:0.5px;color:#222;white-space:nowrap;text-align:right;-webkit-text-stroke:0.2px #333;transform-origin:40px 3.5px;transform:rotate(-90deg);">07/08/2009</div>
<div style="position:absolute;left:239.52px;top:330.00px;width:40px;height:7px;font-size:5.6px;line-height:7px;letter-spacing:0.5px;color:#222;white-space:nowrap;text-align:right;-webkit-text-stroke:0.2px #333;transform-origin:40px 3.5px;transform:rotate(-90deg);">07/10/2009</div>
<div style="position:absolute;left:246.98px;top:330.00px;width:40px;height:7px;font-size:5.6px;line-height:7px;letter-spacing:0.5px;color:#222;white-space:nowrap;text-align:right;-webkit-text-stroke:0.2px #333;transform-origin:40px 3.5px;transform:rotate(-90deg);">07/13/2009</div>
<div style="position:absolute;left:254.45px;top:330.00px;width:40px;height:7px;font-size:5.6px;line-height:7px;letter-spacing:0.5px;color:#222;white-space:nowrap;text-align:right;-webkit-text-stroke:0.2px #333;transform-origin:40px 3.5px;transform:rotate(-90deg);">07/14/2009</div>
<div style="position:absolute;left:261.91px;top:330.00px;width:40px;height:7px;font-size:5.6px;line-height:7px;letter-spacing:0.5px;color:#222;white-space:nowrap;text-align:right;-webkit-text-stroke:0.2px #333;transform-origin:40px 3.5px;transform:rotate(-90deg);">07/16/2009</div>
<div style="position:absolute;left:269.37px;top:330.00px;width:40px;height:7px;font-size:5.6px;line-height:7px;letter-spacing:0.5px;color:#222;white-space:nowrap;text-align:right;-webkit-text-stroke:0.2px #333;transform-origin:40px 3.5px;transform:rotate(-90deg);">07/17/2009</div>
<div style="position:absolute;left:276.84px;top:330.00px;width:40px;height:7px;font-size:5.6px;line-height:7px;letter-spacing:0.5px;color:#222;white-space:nowrap;text-align:right;-webkit-text-stroke:0.2px #333;transform-origin:40px 3.5px;transform:rotate(-90deg);">07/20/2009</div>
<div style="position:absolute;left:284.30px;top:330.00px;width:40px;height:7px;font-size:5.6px;line-height:7px;letter-spacing:0.5px;color:#222;white-space:nowrap;text-align:right;-webkit-text-stroke:0.2px #333;transform-origin:40px 3.5px;transform:rotate(-90deg);">07/21/2009</div>
<div style="position:absolute;left:291.77px;top:330.00px;width:40px;height:7px;font-size:5.6px;line-height:7px;letter-spacing:0.5px;color:#222;white-space:nowrap;text-align:right;-webkit-text-stroke:0.2px #333;transform-origin:40px 3.5px;transform:rotate(-90deg);">07/25/2009</div>
<div style="position:absolute;left:299.23px;top:330.00px;width:40px;height:7px;font-size:5.6px;line-height:7px;letter-spacing:0.5px;color:#222;white-space:nowrap;text-align:right;-webkit-text-stroke:0.2px #333;transform-origin:40px 3.5px;transform:rotate(-90deg);">07/26/2009</div>
<div style="position:absolute;left:306.69px;top:330.00px;width:40px;height:7px;font-size:5.6px;line-height:7px;letter-spacing:0.5px;color:#222;white-space:nowrap;text-align:right;-webkit-text-stroke:0.2px #333;transform-origin:40px 3.5px;transform:rotate(-90deg);">07/29/2009</div>
<div style="position:absolute;left:314.16px;top:330.00px;width:40px;height:7px;font-size:5.6px;line-height:7px;letter-spacing:0.5px;color:#222;white-space:nowrap;text-align:right;-webkit-text-stroke:0.2px #333;transform-origin:40px 3.5px;transform:rotate(-90deg);">07/30/2009</div>
<div style="position:absolute;left:321.62px;top:330.00px;width:40px;height:7px;font-size:5.6px;line-height:7px;letter-spacing:0.5px;color:#222;white-space:nowrap;text-align:right;-webkit-text-stroke:0.2px #333;transform-origin:40px 3.5px;transform:rotate(-90deg);">07/31/2009</div>
<div style="position:absolute;left:329.09px;top:330.00px;width:40px;height:7px;font-size:5.6px;line-height:7px;letter-spacing:0.5px;color:#222;white-space:nowrap;text-align:right;-webkit-text-stroke:0.2px #333;transform-origin:40px 3.5px;transform:rotate(-90deg);">08/01/2009</div>
<div style="position:absolute;left:336.55px;top:330.00px;width:40px;height:7px;font-size:5.6px;line-height:7px;letter-spacing:0.5px;color:#222;white-space:nowrap;text-align:right;-webkit-text-stroke:0.2px #333;transform-origin:40px 3.5px;transform:rotate(-90deg);">08/03/2009</div>
<div style="position:absolute;left:344.01px;top:330.00px;width:40px;height:7px;font-size:5.6px;line-height:7px;letter-spacing:0.5px;color:#222;white-space:nowrap;text-align:right;-webkit-text-stroke:0.2px #333;transform-origin:40px 3.5px;transform:rotate(-90deg);">08/04/2009</div>
<div style="position:absolute;left:351.48px;top:330.00px;width:40px;height:7px;font-size:5.6px;line-height:7px;letter-spacing:0.5px;color:#222;white-space:nowrap;text-align:right;-webkit-text-stroke:0.2px #333;transform-origin:40px 3.5px;transform:rotate(-90deg);">08/05/2009</div>
<div style="position:absolute;left:358.94px;top:330.00px;width:40px;height:7px;font-size:5.6px;line-height:7px;letter-spacing:0.5px;color:#222;white-space:nowrap;text-align:right;-webkit-text-stroke:0.2px #333;transform-origin:40px 3.5px;transform:rotate(-90deg);">08/06/2009</div>
<div style="position:absolute;left:366.41px;top:330.00px;width:40px;height:7px;font-size:5.6px;line-height:7px;letter-spacing:0.5px;color:#222;white-space:nowrap;text-align:right;-webkit-text-stroke:0.2px #333;transform-origin:40px 3.5px;transform:rotate(-90deg);">08/07/2009</div>
<div style="position:absolute;left:373.87px;top:330.00px;width:40px;height:7px;font-size:5.6px;line-height:7px;letter-spacing:0.5px;color:#222;white-space:nowrap;text-align:right;-webkit-text-stroke:0.2px #333;transform-origin:40px 3.5px;transform:rotate(-90deg);">08/10/2009</div>
<div style="position:absolute;left:381.33px;top:330.00px;width:40px;height:7px;font-size:5.6px;line-height:7px;letter-spacing:0.5px;color:#222;white-space:nowrap;text-align:right;-webkit-text-stroke:0.2px #333;transform-origin:40px 3.5px;transform:rotate(-90deg);">08/11/2009</div>
<div style="position:absolute;left:388.80px;top:330.00px;width:40px;height:7px;font-size:5.6px;line-height:7px;letter-spacing:0.5px;color:#222;white-space:nowrap;text-align:right;-webkit-text-stroke:0.2px #333;transform-origin:40px 3.5px;transform:rotate(-90deg);">08/12/2009</div>
<div style="position:absolute;left:396.26px;top:330.00px;width:40px;height:7px;font-size:5.6px;line-height:7px;letter-spacing:0.5px;color:#222;white-space:nowrap;text-align:right;-webkit-text-stroke:0.2px #333;transform-origin:40px 3.5px;transform:rotate(-90deg);">08/13/2009</div>
<div style="position:absolute;left:403.73px;top:330.00px;width:40px;height:7px;font-size:5.6px;line-height:7px;letter-spacing:0.5px;color:#222;white-space:nowrap;text-align:right;-webkit-text-stroke:0.2px #333;transform-origin:40px 3.5px;transform:rotate(-90deg);">08/14/2009</div>
<div style="position:absolute;left:411.19px;top:330.00px;width:40px;height:7px;font-size:5.6px;line-height:7px;letter-spacing:0.5px;color:#222;white-space:nowrap;text-align:right;-webkit-text-stroke:0.2px #333;transform-origin:40px 3.5px;transform:rotate(-90deg);">08/17/2009</div>
<div style="position:absolute;left:418.65px;top:330.00px;width:40px;height:7px;font-size:5.6px;line-height:7px;letter-spacing:0.5px;color:#222;white-space:nowrap;text-align:right;-webkit-text-stroke:0.2px #333;transform-origin:40px 3.5px;transform:rotate(-90deg);">08/18/2009</div>
<div style="position:absolute;left:426.12px;top:330.00px;width:40px;height:7px;font-size:5.6px;line-height:7px;letter-spacing:0.5px;color:#222;white-space:nowrap;text-align:right;-webkit-text-stroke:0.2px #333;transform-origin:40px 3.5px;transform:rotate(-90deg);">08/19/2009</div>
<div style="position:absolute;left:433.58px;top:330.00px;width:40px;height:7px;font-size:5.6px;line-height:7px;letter-spacing:0.5px;color:#222;white-space:nowrap;text-align:right;-webkit-text-stroke:0.2px #333;transform-origin:40px 3.5px;transform:rotate(-90deg);">08/20/2009</div>
<div style="position:absolute;left:441.05px;top:330.00px;width:40px;height:7px;font-size:5.6px;line-height:7px;letter-spacing:0.5px;color:#222;white-space:nowrap;text-align:right;-webkit-text-stroke:0.2px #333;transform-origin:40px 3.5px;transform:rotate(-90deg);">08/21/2009</div>
<div style="position:absolute;left:448.51px;top:330.00px;width:40px;height:7px;font-size:5.6px;line-height:7px;letter-spacing:0.5px;color:#222;white-space:nowrap;text-align:right;-webkit-text-stroke:0.2px #333;transform-origin:40px 3.5px;transform:rotate(-90deg);">08/24/2009</div>
<div style="position:absolute;left:455.97px;top:330.00px;width:40px;height:7px;font-size:5.6px;line-height:7px;letter-spacing:0.5px;color:#222;white-space:nowrap;text-align:right;-webkit-text-stroke:0.2px #333;transform-origin:40px 3.5px;transform:rotate(-90deg);">08/25/2009</div>
<div style="position:absolute;left:463.44px;top:330.00px;width:40px;height:7px;font-size:5.6px;line-height:7px;letter-spacing:0.5px;color:#222;white-space:nowrap;text-align:right;-webkit-text-stroke:0.2px #333;transform-origin:40px 3.5px;transform:rotate(-90deg);">08/26/2009</div>
<div style="position:absolute;left:470.90px;top:330.00px;width:40px;height:7px;font-size:5.6px;line-height:7px;letter-spacing:0.5px;color:#222;white-space:nowrap;text-align:right;-webkit-text-stroke:0.2px #333;transform-origin:40px 3.5px;transform:rotate(-90deg);">08/27/2009</div>
<div style="position:absolute;left:478.36px;top:330.00px;width:40px;height:7px;font-size:5.6px;line-height:7px;letter-spacing:0.5px;color:#222;white-space:nowrap;text-align:right;-webkit-text-stroke:0.2px #333;transform-origin:40px 3.5px;transform:rotate(-90deg);">08/28/2009</div>
<div style="position:absolute;left:485.83px;top:330.00px;width:40px;height:7px;font-size:5.6px;line-height:7px;letter-spacing:0.5px;color:#222;white-space:nowrap;text-align:right;-webkit-text-stroke:0.2px #333;transform-origin:40px 3.5px;transform:rotate(-90deg);">08/31/2009</div>
<div style="position:absolute;left:493.29px;top:330.00px;width:40px;height:7px;font-size:5.6px;line-height:7px;letter-spacing:0.5px;color:#222;white-space:nowrap;text-align:right;-webkit-text-stroke:0.2px #333;transform-origin:40px 3.5px;transform:rotate(-90deg);">09/01/2009</div>
<div style="position:absolute;left:500.76px;top:330.00px;width:40px;height:7px;font-size:5.6px;line-height:7px;letter-spacing:0.5px;color:#222;white-space:nowrap;text-align:right;-webkit-text-stroke:0.2px #333;transform-origin:40px 3.5px;transform:rotate(-90deg);">09/02/2009</div>
<div style="position:absolute;left:508.22px;top:330.00px;width:40px;height:7px;font-size:5.6px;line-height:7px;letter-spacing:0.5px;color:#222;white-space:nowrap;text-align:right;-webkit-text-stroke:0.2px #333;transform-origin:40px 3.5px;transform:rotate(-90deg);">09/03/2009</div>
<div style="position:absolute;left:515.68px;top:330.00px;width:40px;height:7px;font-size:5.6px;line-height:7px;letter-spacing:0.5px;color:#222;white-space:nowrap;text-align:right;-webkit-text-stroke:0.2px #333;transform-origin:40px 3.5px;transform:rotate(-90deg);">09/04/2009</div>
<div style="position:absolute;left:523.15px;top:330.00px;width:40px;height:7px;font-size:5.6px;line-height:7px;letter-spacing:0.5px;color:#222;white-space:nowrap;text-align:right;-webkit-text-stroke:0.2px #333;transform-origin:40px 3.5px;transform:rotate(-90deg);">09/08/2009</div>
<div style="position:absolute;left:530.61px;top:330.00px;width:40px;height:7px;font-size:5.6px;line-height:7px;letter-spacing:0.5px;color:#222;white-space:nowrap;text-align:right;-webkit-text-stroke:0.2px #333;transform-origin:40px 3.5px;transform:rotate(-90deg);">09/09/2009</div>
<div style="position:absolute;left:538.08px;top:330.00px;width:40px;height:7px;font-size:5.6px;line-height:7px;letter-spacing:0.5px;color:#222;white-space:nowrap;text-align:right;-webkit-text-stroke:0.2px #333;transform-origin:40px 3.5px;transform:rotate(-90deg);">09/13/2009</div>
<div style="position:absolute;left:545.54px;top:330.00px;width:40px;height:7px;font-size:5.6px;line-height:7px;letter-spacing:0.5px;color:#222;white-space:nowrap;text-align:right;-webkit-text-stroke:0.2px #333;transform-origin:40px 3.5px;transform:rotate(-90deg);">09/15/2009</div>
<div style="position:absolute;left:553.00px;top:330.00px;width:40px;height:7px;font-size:5.6px;line-height:7px;letter-spacing:0.5px;color:#222;white-space:nowrap;text-align:right;-webkit-text-stroke:0.2px #333;transform-origin:40px 3.5px;transform:rotate(-90deg);">09/16/2009</div>
<div style="position:absolute;left:560.47px;top:330.00px;width:40px;height:7px;font-size:5.6px;line-height:7px;letter-spacing:0.5px;color:#222;white-space:nowrap;text-align:right;-webkit-text-stroke:0.2px #333;transform-origin:40px 3.5px;transform:rotate(-90deg);">09/17/2009</div>
<div style="position:absolute;left:150.7px;top:396.15px;font-size:7.3px;line-height:7.3px;font-weight:bold;color:#222;white-space:nowrap;-webkit-text-stroke:0.08px currentColor;">Installs</div>
<div style="position:absolute;left:332.2px;top:396.65px;font-size:6.9px;line-height:6.9px;font-weight:normal;color:#333;white-space:nowrap;-webkit-text-stroke:0.15px currentColor;">Comparison Measure:</div>
<div style="position:absolute;left:406.3px;top:393.6px;width:69.8px;height:15.8px;box-sizing:border-box;border:1px solid #8a8a8a;background:linear-gradient(#fdfdfd,#dedede)"></div>
<div style="position:absolute;left:410.3px;top:397.25px;font-size:7.7px;line-height:7.7px;font-weight:normal;color:#333;white-space:nowrap;-webkit-text-stroke:0.15px currentColor;">Installs</div>
<svg style="position:absolute;left:466.1px;top:399.9px" width="6" height="4"><path d="M1 0.3 H5 L3 2.5 Z" fill="#333"/></svg>
<div style="position:absolute;left:483.2px;top:396.40px;font-size:7.4px;line-height:7.4px;font-weight:normal;color:#444;white-space:nowrap;-webkit-text-stroke:0.15px currentColor;">Type:</div>
<div style="position:absolute;left:507.3px;top:393.4px;width:76.6px;height:16px;box-sizing:border-box;border:1px solid #8a8a8a;background:linear-gradient(#fdfdfd,#dedede)"></div>
<div style="position:absolute;left:511.3px;top:397.15px;font-size:7.7px;line-height:7.7px;font-weight:normal;color:#333;white-space:nowrap;-webkit-text-stroke:0.15px currentColor;">Column Chart</div>
<svg style="position:absolute;left:573.9px;top:399.79999999999995px" width="6" height="4"><path d="M1 0.3 H5 L3 2.5 Z" fill="#333"/></svg>
<div style="position:absolute;left:588px;top:393.4px;width:16px;height:15.5px;box-sizing:border-box;border:1px solid #9a9a9a;background:linear-gradient(#fbfbfb,#e0e0e0);border-radius:1px"></div>
<svg style="position:absolute;left:591.4px;top:397.09999999999997px" width="10" height="8" viewBox="0 0 10 8"><defs><linearGradient id="sky" x1="0" y1="0" x2="0" y2="1"><stop offset="0" stop-color="#4a98e0"/><stop offset="1" stop-color="#a8d8f0"/></linearGradient><linearGradient id="grass" x1="0" y1="0" x2="0" y2="1"><stop offset="0" stop-color="#8ce050"/><stop offset="1" stop-color="#2c9c10"/></linearGradient></defs><rect x="0.5" y="0.5" width="9" height="7" fill="url(#sky)" stroke="#5a6660" stroke-width="0.9"/><path d="M1 3.6 Q5 2.2 9 3.2 V7 H1 Z" fill="url(#grass)"/></svg>
<div style="position:absolute;left:148.6px;top:423px;width:455px;height:3px;background:#f8f8f8"></div>
<div style="position:absolute;left:148.6px;top:423px;width:455px;height:1px;background:#666"></div>
<div style="position:absolute;left:152px;top:424px;width:1px;height:2px;background:#c4c4c4"></div>
<div style="position:absolute;left:160px;top:424px;width:1px;height:2px;background:#c4c4c4"></div>
<div style="position:absolute;left:167px;top:424px;width:1px;height:2px;background:#c4c4c4"></div>
<div style="position:absolute;left:175px;top:424px;width:1px;height:2px;background:#c4c4c4"></div>
<div style="position:absolute;left:182px;top:424px;width:1px;height:2px;background:#c4c4c4"></div>
<div style="position:absolute;left:190px;top:424px;width:1px;height:2px;background:#c4c4c4"></div>
<div style="position:absolute;left:197px;top:424px;width:1px;height:2px;background:#c4c4c4"></div>
<div style="position:absolute;left:205px;top:424px;width:1px;height:2px;background:#c4c4c4"></div>
<div style="position:absolute;left:212px;top:424px;width:1px;height:2px;background:#c4c4c4"></div>
<div style="position:absolute;left:220px;top:424px;width:1px;height:2px;background:#c4c4c4"></div>
<div style="position:absolute;left:227px;top:424px;width:1px;height:2px;background:#c4c4c4"></div>
<div style="position:absolute;left:234px;top:424px;width:1px;height:2px;background:#c4c4c4"></div>
<div style="position:absolute;left:242px;top:424px;width:1px;height:2px;background:#c4c4c4"></div>
<div style="position:absolute;left:249px;top:424px;width:1px;height:2px;background:#c4c4c4"></div>
<div style="position:absolute;left:257px;top:424px;width:1px;height:2px;background:#c4c4c4"></div>
<div style="position:absolute;left:264px;top:424px;width:1px;height:2px;background:#c4c4c4"></div>
<div style="position:absolute;left:272px;top:424px;width:1px;height:2px;background:#c4c4c4"></div>
<div style="position:absolute;left:279px;top:424px;width:1px;height:2px;background:#c4c4c4"></div>
<div style="position:absolute;left:287px;top:424px;width:1px;height:2px;background:#c4c4c4"></div>
<div style="position:absolute;left:294px;top:424px;width:1px;height:2px;background:#c4c4c4"></div>
<div style="position:absolute;left:302px;top:424px;width:1px;height:2px;background:#c4c4c4"></div>
<div style="position:absolute;left:309px;top:424px;width:1px;height:2px;background:#c4c4c4"></div>
<div style="position:absolute;left:317px;top:424px;width:1px;height:2px;background:#c4c4c4"></div>
<div style="position:absolute;left:324px;top:424px;width:1px;height:2px;background:#c4c4c4"></div>
<div style="position:absolute;left:331px;top:424px;width:1px;height:2px;background:#c4c4c4"></div>
<div style="position:absolute;left:339px;top:424px;width:1px;height:2px;background:#c4c4c4"></div>
<div style="position:absolute;left:346px;top:424px;width:1px;height:2px;background:#c4c4c4"></div>
<div style="position:absolute;left:354px;top:424px;width:1px;height:2px;background:#c4c4c4"></div>
<div style="position:absolute;left:361px;top:424px;width:1px;height:2px;background:#c4c4c4"></div>
<div style="position:absolute;left:369px;top:424px;width:1px;height:2px;background:#c4c4c4"></div>
<div style="position:absolute;left:376px;top:424px;width:1px;height:2px;background:#c4c4c4"></div>
<div style="position:absolute;left:384px;top:424px;width:1px;height:2px;background:#c4c4c4"></div>
<div style="position:absolute;left:391px;top:424px;width:1px;height:2px;background:#c4c4c4"></div>
<div style="position:absolute;left:399px;top:424px;width:1px;height:2px;background:#c4c4c4"></div>
<div style="position:absolute;left:406px;top:424px;width:1px;height:2px;background:#c4c4c4"></div>
<div style="position:absolute;left:414px;top:424px;width:1px;height:2px;background:#c4c4c4"></div>
<div style="position:absolute;left:421px;top:424px;width:1px;height:2px;background:#c4c4c4"></div>
<div style="position:absolute;left:428px;top:424px;width:1px;height:2px;background:#c4c4c4"></div>
<div style="position:absolute;left:436px;top:424px;width:1px;height:2px;background:#c4c4c4"></div>
<div style="position:absolute;left:443px;top:424px;width:1px;height:2px;background:#c4c4c4"></div>
<div style="position:absolute;left:451px;top:424px;width:1px;height:2px;background:#c4c4c4"></div>
<div style="position:absolute;left:458px;top:424px;width:1px;height:2px;background:#c4c4c4"></div>
<div style="position:absolute;left:466px;top:424px;width:1px;height:2px;background:#c4c4c4"></div>
<div style="position:absolute;left:473px;top:424px;width:1px;height:2px;background:#c4c4c4"></div>
<div style="position:absolute;left:481px;top:424px;width:1px;height:2px;background:#c4c4c4"></div>
<div style="position:absolute;left:488px;top:424px;width:1px;height:2px;background:#c4c4c4"></div>
<div style="position:absolute;left:496px;top:424px;width:1px;height:2px;background:#c4c4c4"></div>
<div style="position:absolute;left:503px;top:424px;width:1px;height:2px;background:#c4c4c4"></div>
<div style="position:absolute;left:511px;top:424px;width:1px;height:2px;background:#c4c4c4"></div>
<div style="position:absolute;left:518px;top:424px;width:1px;height:2px;background:#c4c4c4"></div>
<div style="position:absolute;left:526px;top:424px;width:1px;height:2px;background:#c4c4c4"></div>
<div style="position:absolute;left:533px;top:424px;width:1px;height:2px;background:#c4c4c4"></div>
<div style="position:absolute;left:540px;top:424px;width:1px;height:2px;background:#c4c4c4"></div>
<div style="position:absolute;left:548px;top:424px;width:1px;height:2px;background:#c4c4c4"></div>
<div style="position:absolute;left:555px;top:424px;width:1px;height:2px;background:#c4c4c4"></div>
<div style="position:absolute;left:563px;top:424px;width:1px;height:2px;background:#c4c4c4"></div>
<div style="position:absolute;left:570px;top:424px;width:1px;height:2px;background:#c4c4c4"></div>
<div style="position:absolute;left:578px;top:424px;width:1px;height:2px;background:#c4c4c4"></div>
<div style="position:absolute;left:585px;top:424px;width:1px;height:2px;background:#c4c4c4"></div>
<div style="position:absolute;left:593px;top:424px;width:1px;height:2px;background:#c4c4c4"></div>
<div style="position:absolute;left:600px;top:424px;width:1px;height:2px;background:#c4c4c4"></div>
<div style="position:absolute;right:489px;top:419.15px;font-size:6.3px;line-height:6.3px;font-weight:normal;color:#333;white-space:nowrap;-webkit-text-stroke:0.15px currentColor;">10</div>
<div style="position:absolute;left:146px;top:422px;width:2.5px;height:1px;background:#aaa"></div>
<div style="position:absolute;left:620px;top:97px;width:9px;height:329px;background:#fff"></div>
<div style="position:absolute;left:620px;top:97px;width:1px;height:329px;background:#8c8c8c"></div>
<div style="position:absolute;left:621px;top:97px;width:8px;height:8.5px;background:linear-gradient(#ffffff,#ececec)"></div>
<svg style="position:absolute;left:622.5px;top:100px" width="5" height="3"><path d="M0 2.6 L2.5 0 L5 2.6 Z" fill="#222"/></svg>
<div style="position:absolute;left:621px;top:105.3px;width:8px;height:1px;background:#777"></div>
<div style="position:absolute;left:621px;top:106.3px;width:8px;height:125.7px;background:linear-gradient(90deg,#f2f2f2,#ffffff 60%,#fafafa)"></div>
<div style="position:absolute;left:621px;top:232px;width:8px;height:1px;background:#5a5a5a"></div>
<div style="position:absolute;left:621px;top:233px;width:8px;height:183px;background:#c9c9c9"></div>
<div style="position:absolute;left:624px;top:167.5px;width:1.6px;height:1px;background:#666"></div>
<div style="position:absolute;left:624px;top:169.5px;width:1.6px;height:1px;background:#666"></div>
<div style="position:absolute;left:621px;top:416.2px;width:8px;height:1px;background:#777"></div>
<div style="position:absolute;left:621px;top:417.2px;width:8px;height:8.8px;background:linear-gradient(#ffffff,#ececec)"></div>
<svg style="position:absolute;left:622.5px;top:419.6px" width="5" height="3"><path d="M0 0 L2.5 2.6 L5 0 Z" fill="#222"/></svg>
<div style="position:absolute;left:124px;top:426px;width:505px;height:1px;background:#333"></div>
<div style="position:absolute;left:124px;top:427px;width:505px;height:31px;background:linear-gradient(#ffffff 0%,#f0f0f0 30%,#dcdcdc 100%)"></div>
<div style="position:absolute;left:466.3px;top:432.3px;width:66.6px;height:16.3px;box-sizing:border-box;border:1px solid #9a9a9a;background:linear-gradient(#fcfcfc,#e0e0e0);border-radius:1px"></div>
<div style="position:absolute;left:299.6px;width:400px;text-align:center;top:436.90px;font-size:7.6px;line-height:7.6px;font-weight:normal;color:#333;white-space:nowrap;-webkit-text-stroke:0.15px currentColor;">Print to PDF</div>
<div style="position:absolute;left:538px;top:432.3px;width:79px;height:16.3px;box-sizing:border-box;border:1px solid #9a9a9a;background:linear-gradient(#fcfcfc,#e0e0e0);border-radius:1px"></div>
<div style="position:absolute;left:377.5px;width:400px;text-align:center;top:436.80px;font-size:7.8px;line-height:7.8px;font-weight:normal;color:#333;white-space:nowrap;-webkit-text-stroke:0.15px currentColor;">Export to Excel</div>
<div style="position:absolute;left:0px;top:458px;width:630px;height:1px;background:#3c3c3c"></div>
<div style="position:absolute;left:1px;top:459px;width:628px;height:13px;background:linear-gradient(#ffffff 0%,#f2f2f2 30%,#dedede 100%)"></div>
<div style="position:absolute;left:520px;top:462.75px;font-size:7.1px;line-height:7.1px;font-weight:normal;color:#333;white-space:nowrap;letter-spacing:-0.1px;-webkit-text-stroke:0.15px currentColor;">Partner ID:</div>
<div style="position:absolute;left:559.4px;top:460px;width:55.5px;height:10.8px;box-sizing:border-box;border:1px solid #6a6a6a;border-top-color:#b8b8b8;background:linear-gradient(#fafafa,#ececec)"></div>
<div style="position:absolute;left:562.5px;top:461.30px;font-size:7.6px;line-height:7.6px;font-weight:normal;color:#333;white-space:nowrap;-webkit-text-stroke:0.15px currentColor;">662991</div>
<svg style="position:absolute;left:605px;top:463.8px" width="5" height="3"><path d="M0.3 0 H4.7 L2.5 2.3 Z" fill="#333"/></svg>
<svg style="position:absolute;left:620px;top:463px" width="8" height="8"><path d="M7 1 L1 7 M7 4 L4 7" stroke="#c4c4c4" stroke-width="0.8"/></svg>
<div style="position:absolute;left:0px;top:472px;width:630px;height:1px;background:#3a3a3a"></div>
<div style="position:absolute;left:629px;top:0px;width:1px;height:473px;background:#3a3a3a"></div>
</div></body></html>
